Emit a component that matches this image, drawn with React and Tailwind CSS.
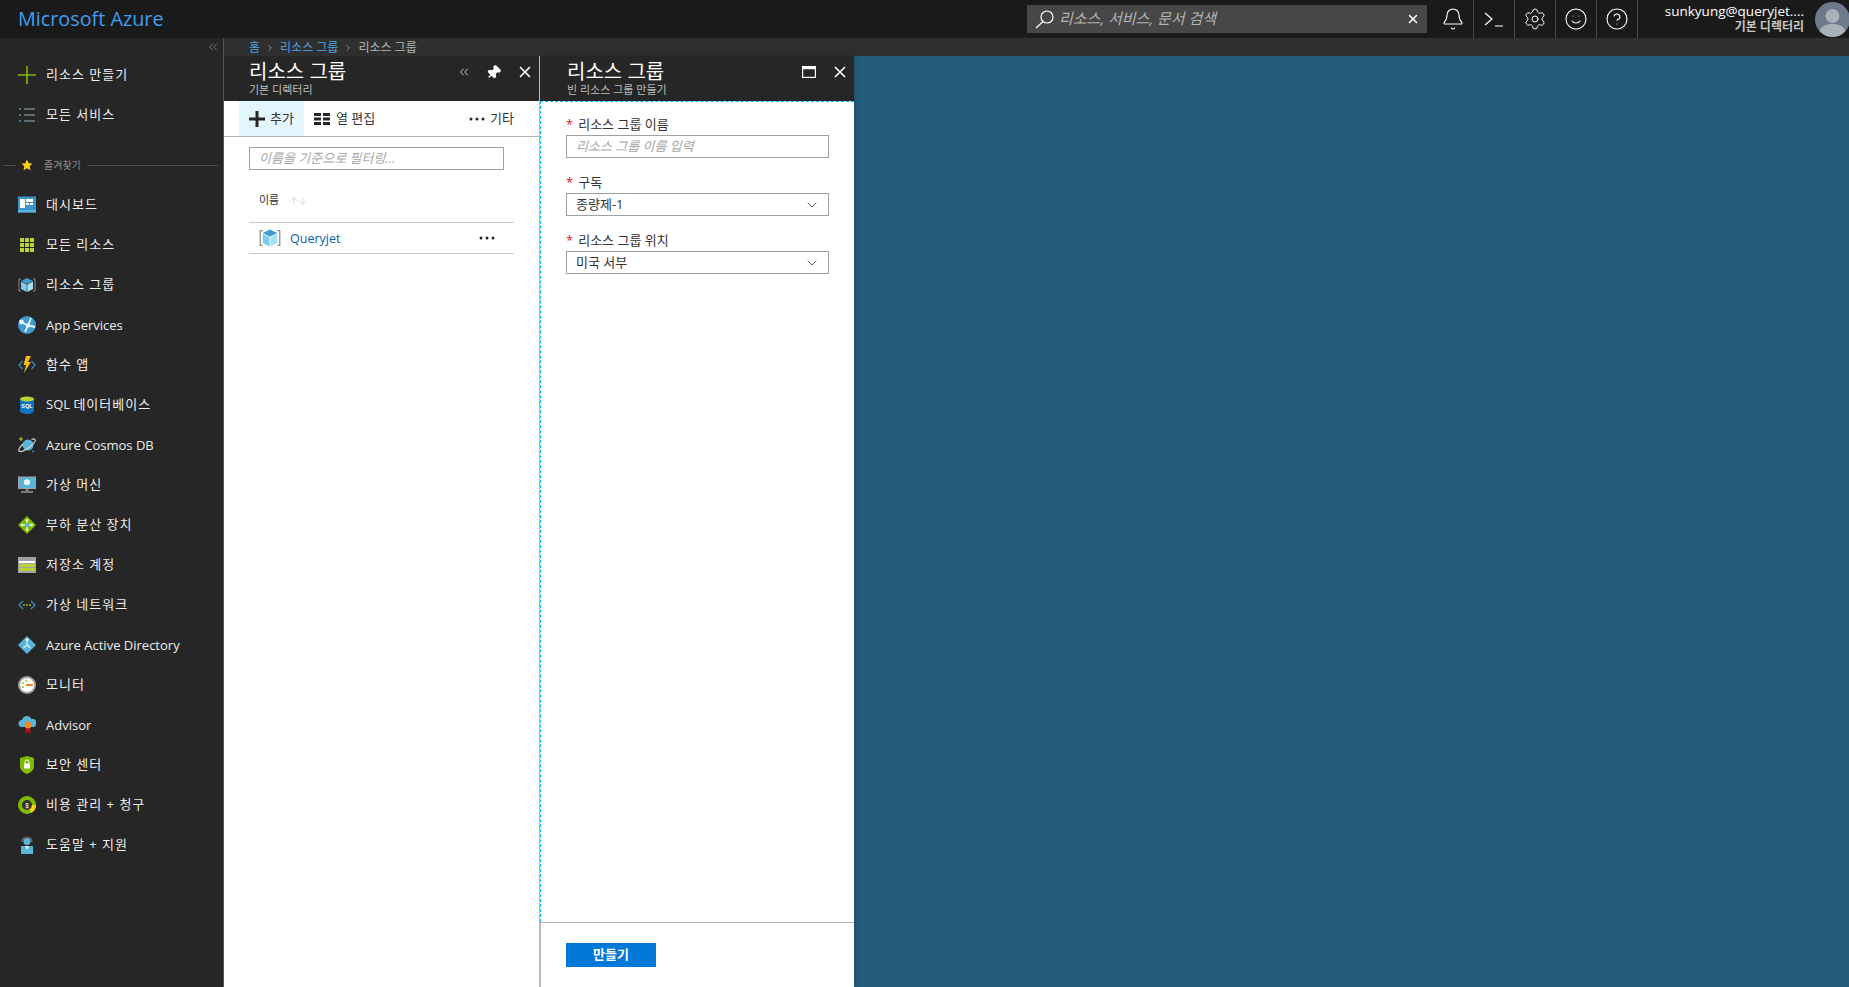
import React from 'react'
import { Bell, Settings, Smile, CircleHelp, X, Pin, ChevronDown, ChevronsLeft, ChevronRight, ArrowUp, ArrowDown } from 'lucide-react'

const font = { fontFamily: '"Open Sans", "Noto Sans CJK KR", sans-serif' }

function Cube({ size = 18 }) {
    return (
        <svg width={size} height={size} viewBox="0 0 18 18">
            <path d="M3 3H1v12h2M15 3h2v12h-2" fill="none" stroke="#8a8a8a" strokeWidth="1" />
            <path d="M9 2l6 3-6 3-6-3z" fill="#3f9bd0" />
            <path d="M3 5.500l5.700 3V16L3 13z" fill="#7fcdee" />
            <path d="M15 5.500l-5.700 3V16l5.700-3z" fill="#a5e0f5" />
        </svg>
    )
}

const icons = {
    create: (
        <svg width="18" height="18" viewBox="0 0 18 18"><path d="M9 0v18M0 9h18" stroke="#7fba00" strokeWidth="1.600" /></svg>
    ),
    services: (
        <svg width="18" height="18" viewBox="0 0 18 18">
            <path d="M1 2h2v2H1zM1 8h2v2H1zM1 14h2v2H1z" fill="#2f7fa8" />
            <path d="M6 2h11v2H6zM6 8h11v2H6zM6 14h11v2H6z" fill="#6a6a6a" />
        </svg>
    ),
    dashboard: (
        <svg width="18" height="18" viewBox="0 0 18 18">
            <rect y="0.500" width="18" height="16" fill="#3a96c8" />
            <path d="M2 3h5v9H2zM8 3h7v3H8zM8 7h3v2H8zM12 7h3v2h-3z" fill="#fff" />
            <path d="M0 14h18v2.500H0z" fill="#59b4d9" />
        </svg>
    ),
    resources: (
        <svg width="18" height="18" viewBox="0 0 18 18" fill="#b8d432">
            <path d="M2 2h4v4H2zM7 2h4v4H7zM12 2h4v4h-4zM2 7h4v4H2zM7 7h4v4H7zM12 7h4v4h-4zM2 12h4v4H2zM7 12h4v4H7zM12 12h4v4h-4z" />
        </svg>
    ),
    group: <Cube />,
    app: (
        <svg width="18" height="18" viewBox="0 0 18 18">
            <circle cx="9" cy="9" r="9" fill="#3f9bd0" />
            <path d="M3 6l7 3.500L7 16M10 9.500L13 2M10 9.500l7 1.500" fill="none" stroke="#e8f6fc" strokeWidth="1.800" />
            <circle cx="3.500" cy="6" r="2.400" fill="#e8f6fc" />
            <circle cx="10" cy="9.500" r="2" fill="#e8f6fc" />
        </svg>
    ),
    fn: (
        <svg width="18" height="18" viewBox="0 0 18 18">
            <path d="M4.500 5L1 9l3.500 4M13.500 5L17 9l-3.500 4" fill="none" stroke="#3a8fc0" strokeWidth="1.200" />
            <path d="M8 0h5l-3 6h3L6 17l2-8H5.500z" fill="#fcb714" />
        </svg>
    ),
    sql: (
        <svg width="18" height="18" viewBox="0 0 18 18">
            <path d="M2 3v12c0 1.500 3 3 7 3s7-1.500 7-3V3z" fill="#0f73c4" />
            <ellipse cx="9" cy="3" rx="7" ry="2.600" fill="#b8d432" />
            <text x="9" y="12" textAnchor="middle" fontSize="5.500" fontWeight="700" fill="#fff" fontFamily="Liberation Sans, sans-serif">SQL</text>
        </svg>
    ),
    cosmos: (
        <svg width="18" height="18" viewBox="0 0 18 18">
            <circle cx="10" cy="9" r="5.500" fill="#59b4d9" />
            <path d="M5 8C2 11 0 14 1 15c1.500 1 6-.5 10-3.500s7-6.500 6-8c-.5-.8-2-.7-3.500-.2" fill="none" stroke="#cfcfcf" strokeWidth="1.300" />
            <path d="M3 1v4M1 3h4" stroke="#b8d432" strokeWidth="1" />
            <circle cx="15" cy="15.500" r="0.900" fill="#3a96c8" />
        </svg>
    ),
    vm: (
        <svg width="18" height="18" viewBox="0 0 18 18">
            <rect y="0.500" width="18" height="12.500" fill="#a0a1a2" />
            <rect x="1" y="1.500" width="16" height="10.500" fill="#59b4d9" />
            <path d="M9 3l3 1.500v3.500L9 9.500 6 8V4.500z" fill="#e6f5fb" />
            <path d="M7.500 13h3v2h-3zM3 15h12v2H3z" fill="#7a7a7a" />
        </svg>
    ),
    lb: (
        <svg width="18" height="18" viewBox="0 0 18 18">
            <path d="M9 0l9 9-9 9-9-9z" fill="#7fba00" />
            <path d="M9 3v12M3 9h12" stroke="#eaf5d0" strokeWidth="1.400" />
            <path d="M7 5l2-2.500L11 5zM7 13l2 2.500 2-2.500zM5 7L2.500 9 5 11zM13 7l2.500 2-2.500 2z" fill="#eaf5d0" />
            <circle cx="9" cy="9" r="2.200" fill="#59b4d9" />
        </svg>
    ),
    storage: (
        <svg width="18" height="18" viewBox="0 0 18 18">
            <rect y="1" width="18" height="16" fill="#a0a1a2" />
            <rect x="1" y="5" width="16" height="2" fill="#fff" />
            <rect x="1" y="8" width="16" height="3" fill="#b8d432" />
            <rect x="1" y="12" width="16" height="3" fill="#b8d432" />
        </svg>
    ),
    vnet: (
        <svg width="18" height="18" viewBox="0 0 18 18">
            <path d="M5 5L1 9l4 4M13 5l4 4-4 4" fill="none" stroke="#3a8fc0" strokeWidth="1.200" />
            <path d="M5 8.200h2v1.600H5zM8 8.200h2v1.600H8zM11 8.200h2v1.600h-2z" fill="#7fba00" />
        </svg>
    ),
    aad: (
        <svg width="18" height="18" viewBox="0 0 18 18">
            <path d="M9 0l9 9-9 9-9-9z" fill="#59b4d9" />
            <path d="M9 4v6M9 9l-3.500 3M9 9l3.500 3" stroke="#e6f5fb" strokeWidth="1.100" fill="none" />
            <circle cx="9" cy="4" r="1.400" fill="#fff" />
        </svg>
    ),
    monitor: (
        <svg width="18" height="18" viewBox="0 0 18 18">
            <circle cx="9" cy="9" r="9" fill="#a0a1a2" />
            <circle cx="9" cy="9" r="7" fill="#fff" />
            <path d="M4 6h2v2H4zM7 3.500h2v2H7zM4 10h2v2H4z" fill="#b8d432" />
            <path d="M8 8h7v2H8z" fill="#f0872a" />
        </svg>
    ),
    advisor: (
        <svg width="18" height="18" viewBox="0 0 18 18">
            <path d="M4 11a3.500 3.500 0 010-7 5 5 0 019.500-1 4 4 0 012 8z" fill="#59b4d9" />
            <path d="M8 11l-1 6.500 3-1.500 3 1.500-1-6.500z" fill="#b01116" />
            <circle cx="10" cy="9" r="3.500" fill="#f0872a" />
        </svg>
    ),
    security: (
        <svg width="18" height="18" viewBox="0 0 18 18">
            <path d="M9 0l7 2v9c0 3-4 6-7 7-3-1-7-4-7-7V2z" fill="#7fba00" />
            <rect x="6" y="7.500" width="6" height="5" fill="#fff" />
            <path d="M7 7.500V6a2 2 0 014 0v1.500" fill="none" stroke="#fff" strokeWidth="1" />
        </svg>
    ),
    cost: (
        <svg width="18" height="18" viewBox="0 0 18 18">
            <circle cx="9" cy="9" r="7" fill="#333" stroke="#7fba00" strokeWidth="4" />
            <path d="M16 9A7 7 0 0 1 12.500 15.060" fill="none" stroke="#fcd116" strokeWidth="4" />
            <text x="9" y="11.500" textAnchor="middle" fontSize="6.500" fontWeight="700" fill="#ddd" fontFamily="Liberation Sans, sans-serif">$</text>
        </svg>
    ),
    help: (
        <svg width="18" height="18" viewBox="0 0 18 18">
            <path d="M3 10h12v8H3z" fill="#59b4d9" />
            <path d="M7 10h4l-2 4z" fill="#e6f5fb" />
            <circle cx="9" cy="5.500" r="3.500" fill="#59b4d9" />
            <path d="M4 6a5 5 0 0110 0" fill="none" stroke="#7a7a7a" strokeWidth="1.200" />
        </svg>
    ),
}

const favorites = [
    ['dashboard', '대시보드'],
    ['resources', '모든 리소스'],
    ['group', '리소스 그룹'],
    ['app', 'App Services'],
    ['fn', '함수 앱'],
    ['sql', 'SQL 데이터베이스'],
    ['cosmos', 'Azure Cosmos DB'],
    ['vm', '가상 머신'],
    ['lb', '부하 분산 장치'],
    ['storage', '저장소 계정'],
    ['vnet', '가상 네트워크'],
    ['aad', 'Azure Active Directory'],
    ['monitor', '모니터'],
    ['advisor', 'Advisor'],
    ['security', '보안 센터'],
    ['cost', '비용 관리 + 청구'],
    ['help', '도움말 + 지원'],
]

function NavLabel({ text }) {
    const latinOnly = !/[가-힣]/.test(text)
    return (
        <span className={latinOnly ? 'pt-[2px]' : ''}>
            {text.split(/([가-힣][가-힣 +]*)/).map((part, i) => (
                <span key={i} className={i % 2 ? 'tracking-[1px]' : ''}>{part}</span>
            ))}
        </span>
    )
}

function NavItem({ icon, label }) {
    return (
        <div className="flex h-10 items-center gap-[10px] pl-[18px] text-[13px] text-[#eeeeee]">
            <span className="flex h-[18px] w-[18px] shrink-0">{icons[icon]}</span>
            <NavLabel text={label} />
        </div>
    )
}

function Sidebar() {
    return (
        <div className="flex w-[224px] shrink-0 flex-col border-r border-[#555555] bg-[#262626]">
            <div className="flex h-[17px] items-center justify-end pr-[3px] text-[#9a9a9a]">
                <ChevronsLeft size={14} strokeWidth={1.200} />
            </div>
            <NavItem icon="create" label="리소스 만들기" />
            <NavItem icon="services" label="모든 서비스" />
            <div className="mb-[10px] mt-5 flex h-5 items-center pl-[3px] pr-[5px]">
                <span className="h-px w-[13px] bg-[#4a4a4a]" />
                <svg width="12" height="12" viewBox="0 0 24 24" className="ml-[5px]" fill="#fcd116">
                    <path d="M12 1l3.400 7.300 7.600.9-5.600 5.400 1.500 8L12 18.600 5.100 22.600l1.500-8L1 9.200l7.600-.9z" />
                </svg>
                <span className="ml-[11px] text-[10px] text-[#8f8f8f]">즐겨찾기</span>
                <span className="ml-[6px] h-px flex-1 bg-[#4a4a4a]" />
            </div>
            {favorites.map(([icon, label]) => (
                <NavItem key={label} icon={icon} label={label} />
            ))}
        </div>
    )
}

function TopIcon({ children }) {
    return (
        <div className="flex h-full w-[41px] items-center justify-center border-r border-[#4a4a4a] text-white">
            {children}
        </div>
    )
}

function TopBar() {
    return (
        <div className="flex h-[38px] shrink-0 items-center bg-[#1a1a1a]">
            <div className="w-[1027px] shrink-0 pl-[18px] text-[19.800px] leading-none text-[#3e9fee]">Microsoft Azure</div>
            <div className="flex h-7 w-[400px] items-center bg-[#474747] pl-2 pr-[7px]">
                <svg width="19" height="19" viewBox="0 0 19 19" fill="none" stroke="#ffffff" strokeWidth="1.200">
                    <circle cx="12" cy="7" r="6" />
                    <path d="M8 11.500L1 18" />
                </svg>
                <span className="ml-[5px] pb-[2px] text-[15px] italic text-[#b4b4b4]">리소스, 서비스, 문서 검색</span>
                <X size={14} strokeWidth={2.600} className="ml-auto text-white" />
            </div>
            <div className="ml-[6px] flex h-full items-center">
                <TopIcon><Bell size={24} strokeWidth={1.100} /></TopIcon>
                <TopIcon>
                    <svg width="20" height="18" viewBox="0 0 20 18" fill="none" stroke="#ffffff" strokeWidth="1.200">
                        <path d="M1 3l7 6-7 6M11 16h8" />
                    </svg>
                </TopIcon>
                <TopIcon><Settings size={24} strokeWidth={1} /></TopIcon>
                <TopIcon><Smile size={24} strokeWidth={1.100} /></TopIcon>
                <TopIcon><CircleHelp size={24} strokeWidth={1.100} /></TopIcon>
            </div>
            <div className="ml-auto flex flex-col items-end leading-none">
                <span className="text-[13.500px] leading-[15px] text-white">sunkyung@queryjet....</span>
                <span className="text-[12px] font-bold leading-[15px] text-[#c8c8c8]">기본 디렉터리</span>
            </div>
            <div className="ml-[11px] mr-[-1px] flex h-[35px] w-[35px] shrink-0 items-center justify-center overflow-hidden rounded-full bg-[#6c7a89]">
                <svg width="35" height="35" viewBox="0 0 35 35" fill="#a9b0b7">
                    <circle cx="17.500" cy="14" r="7" />
                    <path d="M4 31c1-7 7-9 13.500-9S30 24 31 31c-4 3-9 4-13.500 4S8 34 4 31z" />
                </svg>
            </div>
        </div>
    )
}

function BladeHeader({ title, subtitle, children }) {
    return (
        <div className="flex h-[45px] shrink-0 items-start justify-between bg-[#262626]">
            <div className="flex flex-col">
                <span className="mt-1 text-[20px] leading-[23px] text-white">{title}</span>
                <span className="text-[11px] leading-[13px] text-[#bdbdbd]">{subtitle}</span>
            </div>
            {children}
        </div>
    )
}

function Dots({ className }) {
    return (
        <svg width="16" height="4" viewBox="0 0 16 4" fill="#262626" className={className}>
            <circle cx="2" cy="2" r="1.500" /><circle cx="8" cy="2" r="1.500" /><circle cx="14" cy="2" r="1.500" />
        </svg>
    )
}

function ResourceBlade() {
    return (
        <div className="flex w-[316px] shrink-0 flex-col border-r border-[#bbbbbb] bg-white">
            <div className="bg-[#262626] pl-[25px] pr-[5px]">
                <BladeHeader title="리소스 그룹" subtitle="기본 디렉터리">
                    <div className="mt-[7px] flex items-center gap-[15px] text-white">
                        <ChevronsLeft size={14} strokeWidth={1.400} className="text-[#eeeeee]" />
                        <Pin size={15} strokeWidth={2.200} fill="#ffffff" className="rotate-45" />
                        <X size={18} strokeWidth={2.200} />
                    </div>
                </BladeHeader>
            </div>
            <div className="flex h-[36px] shrink-0 items-stretch border-b border-[#b4b4b4] pl-[15px] pr-[25px] text-[13px] text-[#333333]">
                <div className="flex w-[65px] items-center gap-[5px] bg-[#e3f5fd] pl-[10px]">
                    <svg width="16" height="16" viewBox="0 0 16 16" fill="#262626"><path d="M6.500 0h3v6.500H16v3H9.500V16h-3V9.500H0v-3h6.500z" /></svg>
                    <span>추가</span>
                </div>
                <div className="ml-[10px] flex items-center gap-[6px]">
                    <svg width="16" height="12" viewBox="0 0 16 12" fill="#262626">
                        <path d="M0 0h7v3H0zM9 0h7v3H9zM0 4.500h7v3H0zM9 4.500h7v3H9zM0 9h7v3H0zM9 9h7v3H9z" />
                    </svg>
                    <span>열 편집</span>
                </div>
                <div className="ml-auto flex items-center gap-[5px]">
                    <Dots />
                    <span>기타</span>
                </div>
            </div>
            <div className="flex flex-col pl-[25px] pr-[25px]">
                <div className="mt-[10px] flex h-[23px] w-[255px] items-center border border-[#a0a0a0] pl-[9px] text-[13px] italic text-[#a6a6a6]">
                    이름을 기준으로 필터링...
                </div>
                <div className="flex h-[53px] items-center border-b border-[#c8c8c8] pl-[10px] pt-[9px] text-[11px] text-[#333333]">
                    <span>이름</span>
                    <span className="ml-[9px] flex text-[#c4c4c4]">
                        <ArrowUp size={12} strokeWidth={1.200} className="-mr-[3px]" />
                        <ArrowDown size={12} strokeWidth={1.200} />
                    </span>
                </div>
                <div className="flex h-[31px] items-center border-b border-[#c8c8c8] pl-[10px] pr-[19px]">
                    <Cube size={22} />
                    <span className="ml-[9px] pt-[2px] text-[12.500px] text-[#0f5ea8]">Queryjet</span>
                    <Dots className="ml-auto" />
                </div>
            </div>
        </div>
    )
}

function Field({ label, children }) {
    return (
        <div className="flex flex-col">
            <label className="flex h-[17px] items-center text-[13px] text-[#333333]">
                <span className="mr-[5px] leading-none text-[#e81123]">*</span>
                {label}
            </label>
            {children}
        </div>
    )
}

function Select({ value }) {
    return (
        <div className="mt-[2px] flex h-[23px] items-center justify-between border border-[#a0a0a0] pl-[9px] pr-[8px] text-[13px] text-[#333333]">
            <span>{value}</span>
            <ChevronDown size={16} strokeWidth={1.200} />
        </div>
    )
}

function CreateBlade() {
    return (
        <div className="flex w-[314px] shrink-0 flex-col bg-white shadow-[2px_0_4px_rgba(0,0,0,0.12)]">
            <div className="bg-[#262626] pl-[27px] pr-[5px]">
                <BladeHeader title="리소스 그룹" subtitle="빈 리소스 그룹 만들기">
                    <div className="mt-[7px] flex items-center gap-[15px] text-white">
                        <svg width="14" height="12" viewBox="0 0 14 12" fill="none" stroke="#ffffff">
                            <rect x="0.500" y="0.500" width="13" height="11" strokeWidth="1.400" />
                            <path d="M0 2h14" strokeWidth="2.500" />
                        </svg>
                        <X size={18} strokeWidth={2.200} />
                    </div>
                </BladeHeader>
            </div>
            <div className="flex flex-1 flex-col gap-4 border-l border-t border-dashed border-[#00bcf2] pl-[25px] pr-[25px] pt-[14px]">
                <Field label="리소스 그룹 이름">
                    <div className="mt-[2px] flex h-[23px] items-center border border-[#a0a0a0] pl-[9px] text-[13px] italic text-[#a6a6a6]">
                        리소스 그룹 이름 입력
                    </div>
                </Field>
                <Field label="구독"><Select value="종량제-1" /></Field>
                <Field label="리소스 그룹 위치"><Select value="미국 서부" /></Field>
            </div>
            <div className="flex h-[65px] shrink-0 items-start border-l border-t border-l-[#bbbbbb] border-t-[#b4b4b4] pl-[25px] pt-5">
                <button className="flex h-6 w-[90px] items-center justify-center bg-[#0078d7] text-[13px] font-bold text-white">
                    만들기
                </button>
            </div>
        </div>
    )
}

function Breadcrumb() {
    return (
        <div className="flex h-[18px] shrink-0 items-center gap-[5px] bg-[#2f2f2f] pl-[25px] pt-px text-[12px] text-[#4ba3e6]">
            <span>홈</span>
            <ChevronRight size={10} className="text-[#a0a0a0]" />
            <span>리소스 그룹</span>
            <ChevronRight size={10} className="text-[#a0a0a0]" />
            <span className="text-[#b4b4b4]">리소스 그룹</span>
        </div>
    )
}

export default function App() {
    return (
        <div className="flex h-screen flex-col overflow-hidden bg-[#245c7e]" style={font}>
            <TopBar />
            <div className="flex min-h-0 flex-1">
                <Sidebar />
                <div className="flex min-w-0 flex-1 flex-col">
                    <Breadcrumb />
                    <div className="flex min-h-0 flex-1">
                        <ResourceBlade />
                        <CreateBlade />
                    </div>
                </div>
            </div>
        </div>
    )
}
